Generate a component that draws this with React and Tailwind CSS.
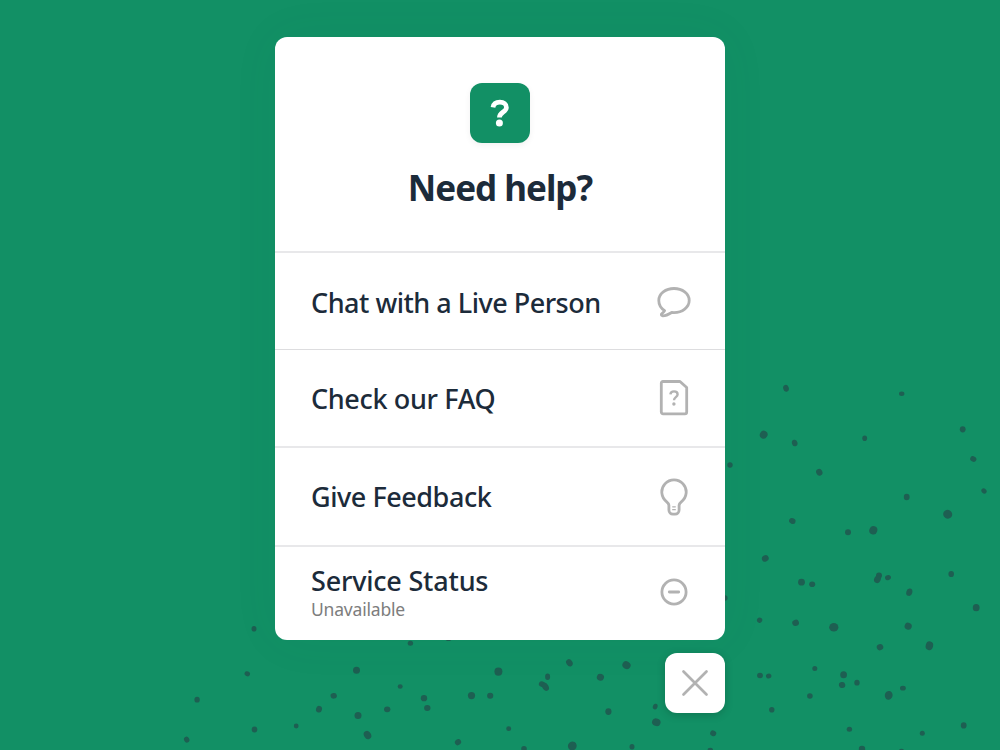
const DOTS = [
  [786, 388.3, 2.8, 3.5, -15], [901.7, 393.7, 2.7, 2.2, 0], [763.7, 434.7, 3.8, 4, 30], [794.7, 443, 2.8, 3.3, -15],
  [864.7, 438.3, 2.4, 2.8, 0], [962.7, 429.3, 2.9, 3.1, 0], [973.3, 459, 3.2, 2.7, 30], [730, 465, 2.7, 2.7, 0],
  [819.3, 472.3, 3.1, 3.4, -30], [984, 491, 2.9, 2.3, 45], [906.7, 497, 2.9, 3.2, 0], [947.7, 514.2, 4.6, 4.4, 30],
  [792.3, 521, 3.3, 2.8, 20], [848, 532.3, 3, 3, 0], [873.3, 530.3, 4, 4.2, 20],
  [765.3, 558.4, 3.5, 3.1, -25], [801.5, 582.2, 3.4, 3.4, 0], [812.2, 584.2, 3, 2.8, 0], [879, 575.5, 3, 3.1, 0],
  [877.5, 579.2, 3.3, 4, 25], [888, 577.6, 3, 2.5, -20], [951.2, 574, 2.8, 3.1, 0], [909.3, 592.2, 3, 3.8, 15],
  [976.2, 607.7, 3.4, 3.6, 0], [725, 598, 2.6, 2.8, 0], [759.6, 620.2, 2.7, 2.6, 20], [795.6, 622.8, 3.4, 3.1, -20],
  [833.8, 627.3, 4.6, 4.3, 0], [908.2, 626.2, 3.6, 3.5, 20], [880, 647.2, 3.3, 3.1, -20], [929.4, 645.8, 3.7, 4.4, 15],
  [814.8, 668.4, 2.5, 2.5, 0], [760, 675.5, 2.9, 2.7, 0], [768.7, 676, 2.7, 2.5, -20], [843.6, 674.7, 3.4, 3.5, 0],
  [842.1, 685, 3.2, 3, -15], [857, 682.7, 2.7, 2.9, 0], [809.9, 696, 2.8, 2.7, 0], [902.9, 688.2, 2.9, 2.4, 0],
  [888.7, 695.3, 3.9, 4.4, 10], [771.8, 709.8, 2.7, 2.8, 0], [849.4, 729.2, 2.7, 2.5, 0], [922.3, 733.2, 2.5, 2.5, 0],
  [963.7, 725.4, 2.9, 3.1, 0], [862, 749, 3.2, 3.3, 0], [901.5, 751.2, 2.7, 2.4, 0],
  [569.4, 662.8, 3, 3.8, -35], [626.5, 665.2, 4.2, 3.8, 30], [498.4, 671.6, 4, 4.2, 0], [547.6, 676.8, 2.5, 3.3, 0],
  [542, 684.2, 3.2, 2.8, 20], [545.4, 686.8, 3.1, 4.4, -30], [600.4, 677.3, 3.6, 3.4, 20], [471.5, 695.6, 3.6, 3.6, 0],
  [490.2, 695.7, 3.1, 3, 0], [608.4, 711.6, 3.1, 3.4, 0], [655.2, 706.6, 2.3, 2.9, 20], [656.3, 722.3, 4.3, 3.8, 20],
  [508.7, 728.7, 2.5, 2.4, 0], [458, 742.2, 3.2, 2.9, -35], [524, 748.7, 2.8, 2.7, 0], [572.3, 746, 4.3, 4.5, 30],
  [632, 746.7, 2.5, 2.8, 0], [713.2, 733.3, 3.1, 2.8, 20], [710.3, 750, 2.7, 2.2, 0], [448.5, 639, 3, 2, 0],
  [254, 628.7, 2.5, 2.8, 0], [247.3, 673.8, 2.8, 2.4, 25], [197.1, 699.7, 2.7, 2.9, 0], [410.4, 643.2, 2.7, 2.5, 0],
  [356.5, 670.2, 3.5, 3.5, 0], [400.2, 686.5, 2.5, 2.3, 0], [333.7, 695.8, 3.2, 2.8, -10], [319, 709.2, 3, 3.3, 15],
  [424, 698.2, 3.2, 3.1, 0], [427.3, 708, 3.2, 3, 0], [387.2, 709.3, 3.2, 2.9, 0], [358, 715.6, 3.5, 3.5, 0],
  [296.2, 726, 2.4, 2.4, 0], [254.5, 729.6, 2.8, 3, 0], [367.5, 735, 3.5, 4.4, -30], [186.7, 739.6, 2.6, 3, -30],
];

function Speckles() {
  return (
    <svg className="absolute inset-0" width="1000" height="750" viewBox="0 0 1000 750" fill="#1e5f52" aria-hidden="true">
      {DOTS.map(([x, y, rx, ry, angle], i) => (
        <ellipse key={i} cx={x} cy={y} rx={rx} ry={ry} transform={`rotate(${angle} ${x} ${y})`} />
      ))}
    </svg>
  );
}

function Icon({ children }) {
  return (
    <svg
      className="shrink-0"
      width="40"
      height="40"
      viewBox="0 0 40 40"
      fill="none"
      stroke="#b2b2b2"
      strokeWidth="2.8"
      strokeLinecap="round"
      strokeLinejoin="round"
      aria-hidden="true"
    >
      {children}
    </svg>
  );
}

const ChatIcon = () => (
  <Icon>
    <path d="M20 7.500c8.300 0 15.200 5.200 15.200 12S28.300 31.600 20 31.600c-.8 0-1.500 0-2.300-.1-2.900 1.800-5.700 3.400-9 3.300-1.600-.1-1.800-1.400-.8-2.200 1.100-.8 2.100-1.800 2.700-3-3.600-2.300-5.800-5.900-5.800-10.100C4.800 12.700 11.700 7.500 20 7.500Z" />
  </Icon>
);

const FaqIcon = () => (
  <Icon>
    <path d="M8.900 3.500H26L32.700 9.500V34a1.800 1.800 0 0 1-1.800 1.800H9.100a1.800 1.800 0 0 1-1.800-1.800V5.100a1.600 1.600 0 0 1 1.600-1.600Z" />
    <path d="M16.400 16.400c.2-1.900 1.600-3 3.600-3s3.600 1.200 3.600 3c0 2.700-3.600 2.800-3.600 5.800" strokeWidth="2.4" strokeLinecap="butt" />
    <circle cx="19.900" cy="26" r="1.700" fill="#b2b2b2" stroke="none" />
  </Icon>
);

const BulbIcon = () => (
  <Icon>
    <path d="M14.900 28.200c-.2-1.500-.8-2.300-2.200-3.400A12.200 12.200 0 1 1 27.300 24.800c-1.400 1.100-2 1.900-2.200 3.400v4.900a4 4 0 0 1-4 4h-2.200a4 4 0 0 1-4-4Z" />
    <path d="M18.700 29.800h2.600M18.700 32.700h2.600" strokeWidth="1.300" />
  </Icon>
);

const StatusIcon = () => (
  <Icon>
    <circle cx="20" cy="20" r="12.100" />
    <path d="M15.300 20h9.400" />
  </Icon>
);

export default function App() {
  return (
    <main className="relative flex h-[750px] w-[1000px] flex-col items-center overflow-hidden bg-[#129065] pt-[37px] font-['Noto_Sans',sans-serif] text-[#1c2b3a]">
      <Speckles />
      <div className="relative flex w-[450px] flex-col items-end gap-[12.5px]">
        <section className="flex h-[603px] w-full flex-col overflow-hidden rounded-xl bg-white shadow-[0_0_50px_rgba(30,95,82,0.05)]">
          <header className="flex h-[214px] flex-col items-center pt-[45.500px]">
            <div className="flex size-[60px] shrink-0 items-center justify-center rounded-xl bg-[#129065] shadow-[0_2px_6px_rgba(0,0,0,0.06)]">
              <svg width="60" height="60" viewBox="0 0 60 60" fill="none" aria-hidden="true">
                <path d="M23 24.300c.6-3.400 3.200-5.100 6.900-5.100 3.900 0 6.500 2 6.500 5.200 0 4.600-7 4.700-7 10.100" stroke="white" strokeWidth="4.700" />
                <circle cx="29.400" cy="40" r="3.500" fill="white" />
              </svg>
            </div>
            <h1 className="mt-[21.500px] whitespace-nowrap text-[35px] leading-[48px] font-bold tracking-[-1px]">Need help?</h1>
          </header>
          <button className="flex h-[98px] items-center justify-between border-t-2 border-[#e8e8ea] pr-[31px] pl-9 text-left">
            <span className="pt-1 text-[27px] leading-9 font-medium tracking-[-0.5px]">Chat with a Live Person</span>
            <ChatIcon />
          </button>
          <button className="flex h-[97px] items-center justify-between border-t border-[#dddddf] pr-[31px] pl-9 text-left">
            <span className="pt-0.5 text-[27px] leading-9 font-medium tracking-[-0.35px]">Check our FAQ</span>
            <FaqIcon />
          </button>
          <button className="flex h-[99px] items-center justify-between border-t-2 border-[#e8e8ea] pr-[31px] pl-9 text-left">
            <span className="text-[27px] leading-9 font-medium tracking-[-0.45px]">Give Feedback</span>
            <BulbIcon />
          </button>
          <button className="flex h-[95px] items-center justify-between border-t-2 border-[#e8e8ea] pr-[31px] pb-[4px] pl-9 text-left">
            <span className="-mt-px flex flex-col">
              <span className="text-[27px] leading-9 font-medium tracking-[-0.2px]">Service Status</span>
              <span className="text-[17.500px] leading-5 tracking-[-0.2px] text-[#7d7d7d]">Unavailable</span>
            </span>
            <StatusIcon />
          </button>
        </section>
        <button aria-label="Close" className="flex size-[60px] items-center justify-center rounded-xl bg-white shadow-[0_2px_8px_rgba(0,0,0,0.18)]">
          <svg width="30" height="30" viewBox="0 0 30 30" stroke="#b2b2b2" strokeWidth="2.700" strokeLinecap="round" aria-hidden="true">
            <path d="M3.500 3.500 26.500 26.500M26.500 3.500 3.500 26.500" />
          </svg>
        </button>
      </div>
    </main>
  );
}
